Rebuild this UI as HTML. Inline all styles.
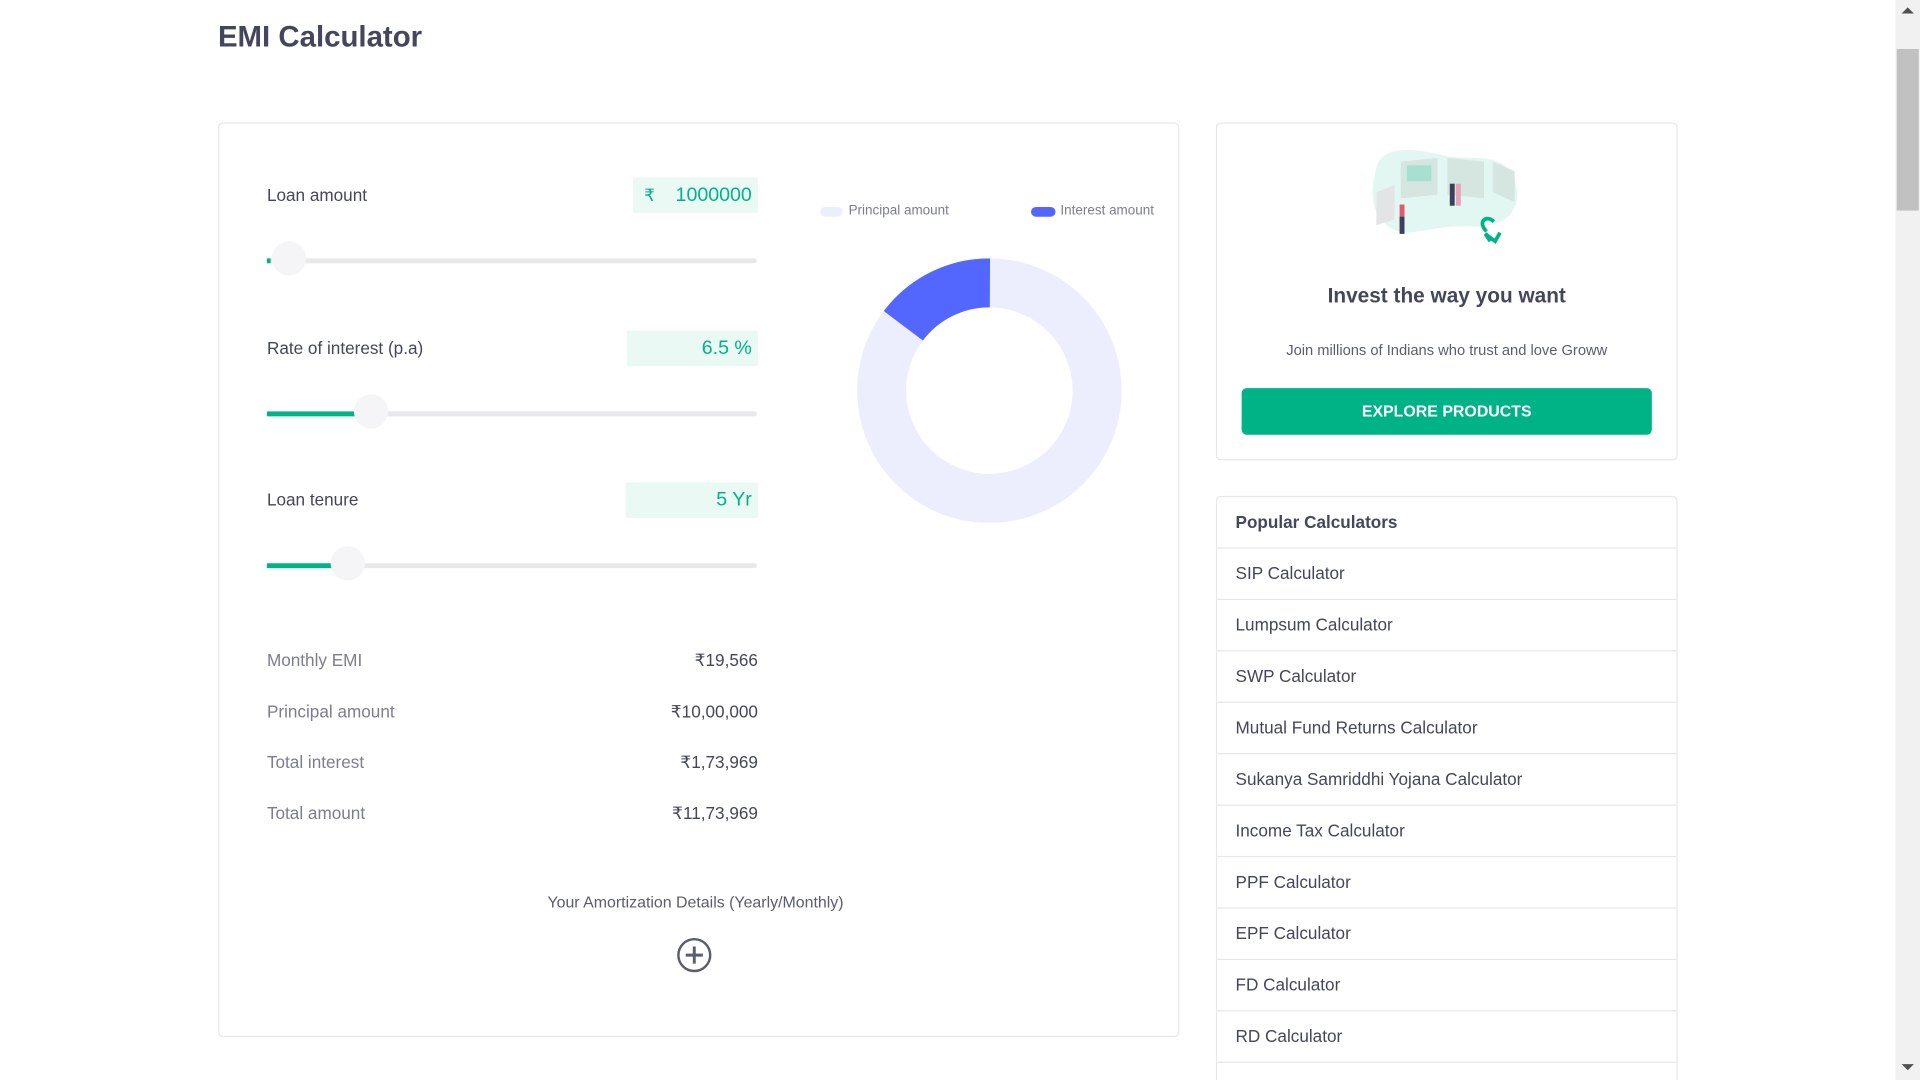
<!DOCTYPE html>
<html><head><meta charset="utf-8"><style>
html,body{margin:0;padding:0;background:#fff;width:1920px;height:1080px;overflow:hidden}
#w{position:absolute;left:0;top:0;width:1568px;height:882px;overflow:hidden;transform:scale(1.22449);transform-origin:0 0;font-family:"Liberation Sans",sans-serif;color:#44475b}
.a{position:absolute}
.card{position:absolute;border:1px solid #e7e7ea;border-radius:4px;background:#fff}
.lbl{font-size:14px;color:#44475b}
.val{background:#ebf9f5;color:#00b386;font-size:16px;text-align:right;height:29px;line-height:29px;padding-right:5px;box-sizing:border-box}
.track{height:4px;background:#e8e8eb;border-radius:2px}
.fill{height:4px;background:#00b386}
.knob{width:28px;height:28px;border-radius:50%;background:#f5f5f7}
.rl{font-size:14px;color:#7c7e8c}
.rv{font-size:14px;color:#44475b;text-align:right;width:200px}
.row{position:absolute;left:0;width:375px;height:41px;border-top:1px solid #e7e7ea;font-size:14px;line-height:41px;padding-left:15px;box-sizing:border-box;color:#44475b}
</style></head><body><div id="w">
<div class="a" style="left:178px;top:17px;font-size:24px;font-weight:bold;color:#44475b">EMI Calculator</div>

<div class="card" style="left:178px;top:100px;width:783px;height:745px">
 <div class="a lbl" style="left:39px;top:50px">Loan amount</div>
 <div class="a val" style="left:338px;top:44px;width:102px"><span style="float:left;padding-left:9px;font-size:14px">₹</span>1000000</div>
 <div class="a track" style="left:39px;top:110px;width:400px"></div>
 <div class="a fill" style="left:39px;top:110px;width:3px"></div>
 <div class="a knob" style="left:43px;top:96px"></div>

 <div class="a lbl" style="left:39px;top:175px">Rate of interest (p.a)</div>
 <div class="a val" style="left:333px;top:169px;width:107px">6.5 %</div>
 <div class="a track" style="left:39px;top:235px;width:400px"></div>
 <div class="a fill" style="left:39px;top:235px;width:78px"></div>
 <div class="a knob" style="left:110px;top:221px"></div>

 <div class="a lbl" style="left:39px;top:299px">Loan tenure</div>
 <div class="a val" style="left:332px;top:293px;width:108px">5 Yr</div>
 <div class="a track" style="left:39px;top:359px;width:400px"></div>
 <div class="a fill" style="left:39px;top:359px;width:58px"></div>
 <div class="a knob" style="left:91px;top:345px"></div>

 <div class="a rl" style="left:39px;top:430px">Monthly EMI</div><div class="a rv" style="left:240px;top:430px">₹19,566</div>
 <div class="a rl" style="left:39px;top:472px">Principal amount</div><div class="a rv" style="left:240px;top:472px">₹10,00,000</div>
 <div class="a rl" style="left:39px;top:513px">Total interest</div><div class="a rv" style="left:240px;top:513px">₹1,73,969</div>
 <div class="a rl" style="left:39px;top:555px">Total amount</div><div class="a rv" style="left:240px;top:555px">₹11,73,969</div>

 <div class="a" style="left:0;width:778px;text-align:center;top:628px;font-size:13px;color:#5a5d6e">Your Amortization Details (Yearly/Monthly)</div>
 <svg class="a" style="left:373px;top:664px" width="30" height="30" viewBox="0 0 30 30"><circle cx="15" cy="15" r="13" fill="none" stroke="#5a5d6e" stroke-width="2"/><path d="M15 8v14M8 15h14" stroke="#5a5d6e" stroke-width="2.4"/></svg>

 <div class="a" style="left:491px;top:68px;width:18px;height:8px;border-radius:4px;background:#ecedfd"></div>
 <div class="a" style="left:514px;top:65px;font-size:11px;color:#7c7e8c">Principal amount</div>
 <div class="a" style="left:663px;top:68px;width:20px;height:8px;border-radius:4px;background:#5367ff"></div>
 <div class="a" style="left:687px;top:65px;font-size:11px;color:#7c7e8c">Interest amount</div>
 <svg class="a" style="left:521px;top:110px" width="216" height="216" viewBox="0 0 216 216">
  <circle cx="108" cy="108" r="88" fill="none" stroke="#ecedfd" stroke-width="40"/>
  <circle cx="108" cy="108" r="88" fill="none" stroke="#5367ff" stroke-width="40" stroke-dasharray="81.8 471" transform="rotate(-143 108 108)"/>
 </svg>
</div>

<div class="card" style="left:993px;top:100px;width:375px;height:274px">
 <svg class="a" style="left:125px;top:16px" width="125" height="90" viewBox="0 0 125 90">
  <path d="M5 20C10 0 40 5 60 10S110 5 118 30S110 70 80 68S30 80 15 68S0 40 5 20Z" fill="#e3f7f2"/>
  <path d="M5 40l15-6v28l-15 5z" fill="#e2e4e6"/><path d="M25 15l30-3v30l-30 3z" fill="#d5e6e1"/><rect x="30" y="18" width="20" height="13" fill="#a8e0cf"/>
  <path d="M63 12l30 3v30l-30-3z" fill="#d5e6e1"/><path d="M100 15l18 8v25l-18-8z" fill="#d5e6e1"/>
  <rect x="24" y="50" width="4" height="22" fill="#e05a72"/><rect x="24" y="60" width="4" height="14" fill="#3a3f5c"/>
  <rect x="65" y="33" width="4" height="18" fill="#3a3f5c"/><rect x="70" y="33" width="4" height="18" fill="#e8a3b8"/>
  <path d="M95 72c-8-8 0-14 6-8M98 80l-4-6 8 6 4-7" stroke="#00b386" stroke-width="3" fill="none"/>
 </svg>
 <div class="a" style="left:0;width:375px;text-align:center;top:131px;font-size:17px;font-weight:bold;color:#44475b">Invest the way you want</div>
 <div class="a" style="left:0;width:375px;text-align:center;top:178px;font-size:12px;color:#5a5d6e">Join millions of Indians who trust and love Groww</div>
 <div class="a" style="left:20px;top:216px;width:335px;height:38px;background:#00b386;border-radius:4px;color:#fff;font-weight:bold;font-size:13px;text-align:center;line-height:38px">EXPLORE PRODUCTS</div>
</div>

<div class="card" style="left:993px;top:405px;width:375px;height:500px;overflow:hidden;border-radius:4px 4px 0 0">
 <div class="row" style="top:0;border-top:none;font-weight:bold">Popular Calculators</div>
 <div class="row" style="top:41px">SIP Calculator</div>
 <div class="row" style="top:83px">Lumpsum Calculator</div>
 <div class="row" style="top:125px">SWP Calculator</div>
 <div class="row" style="top:167px">Mutual Fund Returns Calculator</div>
 <div class="row" style="top:209px">Sukanya Samriddhi Yojana Calculator</div>
 <div class="row" style="top:251px">Income Tax Calculator</div>
 <div class="row" style="top:293px">PPF Calculator</div>
 <div class="row" style="top:335px">EPF Calculator</div>
 <div class="row" style="top:377px">FD Calculator</div>
 <div class="row" style="top:419px">RD Calculator</div>
 <div class="row" style="top:461px"></div>
</div>

<div class="a" style="left:1548px;top:0;width:20px;height:882px;background:#f1f1f1"></div>
<div class="a" style="left:1549px;top:40px;width:18px;height:132px;background:#c1c1c1"></div>
<div class="a" style="left:1553px;top:6px;width:0;height:0;border-left:5px solid transparent;border-right:5px solid transparent;border-bottom:5px solid #505050"></div>
<div class="a" style="left:1553px;top:869px;width:0;height:0;border-left:5px solid transparent;border-right:5px solid transparent;border-top:5px solid #505050"></div>
</div></body></html>
